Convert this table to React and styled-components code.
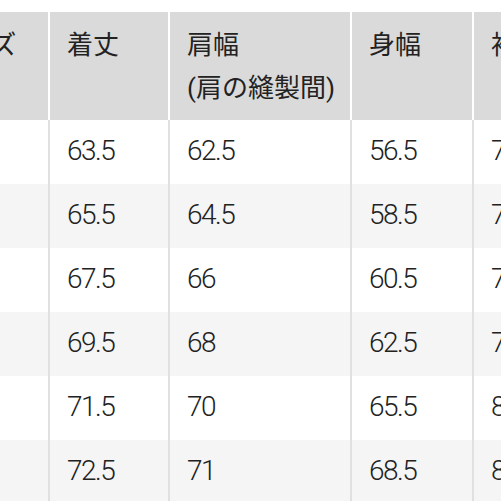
import React from 'react';
import styled, { createGlobalStyle } from 'styled-components';

const GlobalStyle = createGlobalStyle`
  html, body {
    margin: 0;
    padding: 0;
    background: #fff;
    overflow: hidden;
  }
  body {
    font-family: Roboto, "Noto Sans CJK JP", sans-serif;
  }
`;

const Table = styled.div`
  display: grid;
  grid-template-columns: 128px 120px 182px 122px 140px;
  grid-auto-rows: 64px;
  grid-template-rows: 108px;
  margin: 12px 0 0 -78px;
  width: max-content;
`;

const HeadCell = styled.div`
  box-sizing: border-box;
  background: #dadada;
  border-right: 2px solid #fff;
  padding: 12px 17px 0;
  font-family: Roboto, "Noto Sans CJK JP", sans-serif;
  font-size: 26px;
  line-height: 43px;
  color: #222;
  white-space: nowrap;
`;

const Cell = styled.div`
  box-sizing: border-box;
  display: flex;
  align-items: center;
  background: ${p => (p.$alt ? '#f5f5f5' : '#fff')};
  border-right: 2px solid #e0e0e0;
  padding: 0 17px 4px;
  font-size: 28px;
  font-weight: 300;
  letter-spacing: -1.5px;
  color: #222;
  white-space: nowrap;
`;

const headers = ['サイズ', '着丈', ['肩幅', '(肩の縫製間)'], '身幅', '袖丈'];

const rows = [
  ['XS', '63.5', '62.5', '56.5', '76'],
  ['S', '65.5', '64.5', '58.5', '77.5'],
  ['M', '67.5', '66', '60.5', '79'],
  ['L', '69.5', '68', '62.5', '79.5'],
  ['XL', '71.5', '70', '65.5', '81'],
  ['XXL', '72.5', '71', '68.5', '82'],
];

export default function App() {
  return (
    <>
      <GlobalStyle />
      <Table>
        {headers.map((h, i) => (
          <HeadCell key={i}>
            {Array.isArray(h) ? h.map((line, j) => <div key={j}>{line}</div>) : h}
          </HeadCell>
        ))}
        {rows.map((row, r) =>
          row.map((v, c) => (
            <Cell key={r + '-' + c} $alt={r % 2 === 1}>
              {v}
            </Cell>
          ))
        )}
      </Table>
    </>
  );
}
